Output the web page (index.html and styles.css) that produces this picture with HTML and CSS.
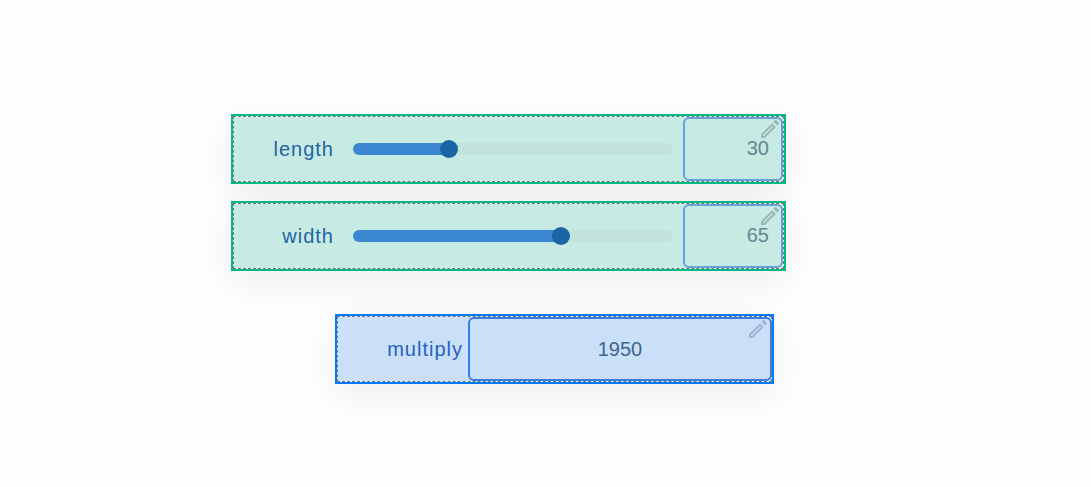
FILE: index.html
```
<!DOCTYPE html>
<html lang="en">
<head>
<meta charset="utf-8">
<title>Multiply</title>
<link rel="stylesheet" href="styles.css">
</head>
<body>
<main class="canvas">
  <section class="inputs">
    <div class="node node-input">
      <label class="name" for="length">length</label>
      <div class="slider">
        <div class="rail"><div class="fill" style="width: 30%"></div></div>
        <input class="range" id="length" type="range" min="0" max="100" value="30">
      </div>
      <div class="field">
        <input class="value" type="text" value="30" aria-label="length value">
        <button class="edit" type="button" aria-label="Edit length"><svg class="pencil" viewBox="0 0 24 24"><path d="M14.06 9.02l.92.92L5.92 19H5v-.92l9.06-9.06M17.66 3c-.25 0-.51.1-.7.29l-1.53 1.53 3.75 3.75 1.53-1.53c.39-.39.39-1.02 0-1.41l-2.34-2.34c-.2-.2-.45-.29-.71-.29zM14.060 6.190L3 17.250V21h3.750L17.810 9.940l-3.750-3.750z"/></svg></button>
      </div>
    </div>
    <div class="node node-input">
      <label class="name" for="width">width</label>
      <div class="slider">
        <div class="rail"><div class="fill" style="width: 65%"></div></div>
        <input class="range" id="width" type="range" min="0" max="100" value="65">
      </div>
      <div class="field">
        <input class="value" type="text" value="65" aria-label="width value">
        <button class="edit" type="button" aria-label="Edit width"><svg class="pencil" viewBox="0 0 24 24"><path d="M14.06 9.02l.92.92L5.92 19H5v-.92l9.06-9.06M17.66 3c-.25 0-.51.1-.7.29l-1.53 1.53 3.75 3.75 1.53-1.53c.39-.39.39-1.02 0-1.41l-2.34-2.34c-.2-.2-.45-.29-.71-.29zM14.060 6.190L3 17.250V21h3.750L17.810 9.940l-3.750-3.750z"/></svg></button>
      </div>
    </div>
  </section>
  <section class="node node-output">
    <label class="name" for="multiply">multiply</label>
    <div class="field">
      <input class="value" id="multiply" type="text" value="1950">
      <button class="edit" type="button" aria-label="Edit multiply"><svg class="pencil" viewBox="0 0 24 24"><path d="M14.06 9.02l.92.92L5.92 19H5v-.92l9.06-9.06M17.66 3c-.25 0-.51.1-.7.29l-1.53 1.53 3.75 3.75 1.53-1.53c.39-.39.39-1.02 0-1.41l-2.34-2.34c-.2-.2-.45-.29-.71-.29zM14.060 6.190L3 17.250V21h3.750L17.810 9.940l-3.750-3.750z"/></svg></button>
    </div>
  </section>
</main>
</body>
</html>
```
FILE: styles.css
```
* {
  box-sizing: border-box;
}

body {
  margin: 0;
  background: #fefefe;
  font-family: "Liberation Sans", Arial, sans-serif;
  font-size: 20px;
}

.canvas {
  display: flex;
  flex-direction: column;
  align-items: flex-start;
  gap: 43px;
  min-height: 100vh;
  padding: 114px 0 64px 231px;
}

.inputs {
  display: flex;
  flex-direction: column;
  gap: 17px;
}

.node {
  position: relative;
  display: flex;
  align-items: center;
  padding: 3px;
  box-shadow: 0 10px 40px rgba(0, 0, 0, 0.07);
}

/* selection outline: solid frame with a dashed line just inside it */
.node::before {
  content: "";
  position: absolute;
  inset: 0;
  border: 2px solid var(--frame);
  pointer-events: none;
}

.node::after {
  content: "";
  position: absolute;
  inset: 2px;
  border: 1px dashed #777;
  pointer-events: none;
}

.node-input {
  --frame: #02b987;
  --line: #66a1d8;
  width: 555px;
  background: linear-gradient(#c7eae3, #c7eae3) content-box, #fff;
}

.node-output {
  --frame: #007bff;
  --line: #3a7be0;
  width: 439px;
  margin-left: 104px;
  background: linear-gradient(#c9e0f8, #c9e0f8) content-box, #fff;
}

.name {
  flex: 1;
  text-align: right;
  line-height: 24px;
  letter-spacing: 1px;
  color: #1c65a5;
}

.node-input .name {
  padding-right: 19px;
}

.node-output .name {
  padding-right: 5px;
  color: #2860bd;
}

.slider {
  display: grid;
  align-items: center;
  width: 320px;
  margin-right: 10px;
}

.rail,
.range {
  grid-area: 1 / 1;
}

.rail {
  height: 12px;
  border-radius: 6px;
  background: #c2e3dc;
  overflow: hidden;
}

.fill {
  height: 100%;
  background: #3a86d1;
}

.range {
  appearance: none;
  height: 18px;
  margin: 0 -9px;
  background: transparent;
}

.range::-webkit-slider-thumb {
  appearance: none;
  width: 18px;
  height: 18px;
  border: 0;
  border-radius: 50%;
  background: #1c65a5;
}

.field {
  position: relative;
  width: 100px;
  height: 64px;
}

.node-output .field {
  width: 304px;
  margin-right: -1px;
}

.value {
  width: 100%;
  height: 100%;
  padding: 0 12px 2px 0;
  border: 2px solid var(--line);
  border-radius: 6px;
  background: transparent;
  color: #63898f;
  font: inherit;
  text-align: right;
}

.node-output .value {
  padding: 0;
  color: #3f658f;
  text-align: center;
}

.edit {
  position: absolute;
  top: 0;
  right: 1px;
  width: 24px;
  height: 24px;
  padding: 0;
  border: 0;
  background: transparent;
  color: #9ab6ba;
}

.node-output .edit {
  right: 2px;
  color: #9fb4d3;
}

.pencil {
  display: block;
  width: 24px;
  height: 24px;
  fill: currentColor;
}
```
